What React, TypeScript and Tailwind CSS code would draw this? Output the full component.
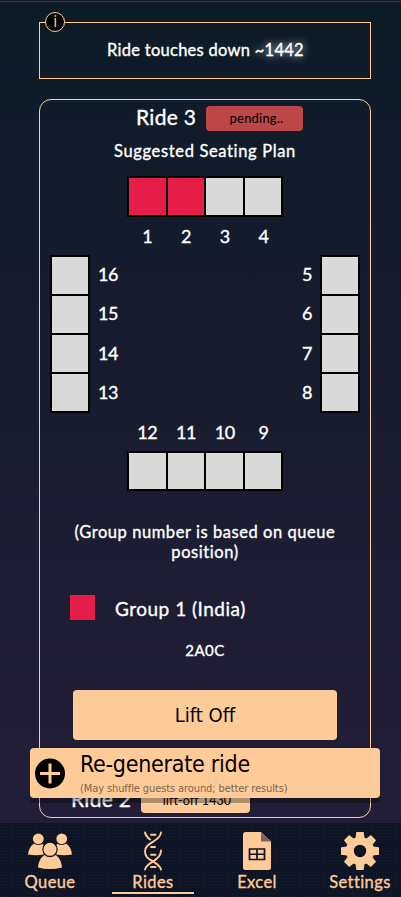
import React from "react";

const SEAT_RED = "bg-[#e71d49]";
const SEAT_EMPTY = "bg-[#d9d9d9]";

function SeatRow({ seats, className }: { seats: boolean[]; className: string }) {
  return (
    <div className={`flex gap-[2px] bg-black p-[2px] ${className}`}>
      {seats.map((taken, i) => (
        <div key={i} className={`flex-1 ${taken ? SEAT_RED : SEAT_EMPTY}`} />
      ))}
    </div>
  );
}

function SeatNumbers({ values, className }: { values: number[]; className: string }) {
  return (
    <div className={`flex text-[18px] leading-[39px] tracking-[-0.4px] ${className}`}>
      {values.map((v) => (
        <span key={v} className="flex-1">
          {v}
        </span>
      ))}
    </div>
  );
}

function QueueIcon() {
  return (
    <svg width="44" height="37" viewBox="0 0 44 37" fill="#ffcb98">
      <circle cx="10.3" cy="5.8" r="5.4" />
      <circle cx="33.7" cy="5.8" r="5.4" />
      <path d="M0 21.5C.5 16.500 2.500 13 6 10.500Q10.300 13.500 14.500 10.800L16.500 13Q14 17 15.800 21.500Q8 23 0 21.500Z" />
      <path d="M44 21.500C43.500 16.500 41.500 13 38 10.500Q33.700 13.500 29.500 10.800L27.500 13Q30 17 28.200 21.500Q36 23 44 21.500Z" />
      <circle cx="22" cy="16.300" r="7.700" fill="#0e1424" />
      <circle cx="22" cy="16.300" r="6.500" />
      <path d="M10 34.500C10.500 29 12.500 24.500 16.500 22Q22 26.500 27.500 22C31.500 24.500 33.500 29 34 34.500Q22 37.500 10 34.500Z" />
    </svg>
  );
}

function RidesIcon() {
  return (
    <svg width="18" height="40" viewBox="0 0 18 40" fill="none" stroke="#ffcb98" strokeWidth="1.900" strokeLinecap="round">
      <path d="M1 1.500C1.500 4.500 3.500 6.500 6 8.500" />
      <path d="M17 1.500C16 11 1 11 1 20.500C1 26 5 28 9 30.500C13 33 16 34.500 17 38.500" />
      <path d="M17 19.500C17 25 13 28 9 30.500C5 33 2 34.500 1 38.500" />
      <path d="M7 3.700H11.500M7 16H11M7 23.700H11.500M7 36H11.500" />
    </svg>
  );
}

function ExcelIcon() {
  return (
    <svg width="28" height="38" viewBox="0 0 28 38">
      <path d="M2.500 0H18L28 9.500V35.500Q28 38 25.500 38H2.500Q0 38 0 35.500V2.500Q0 0 2.500 0Z" fill="#ffcb98" />
      <path d="M18 0V9.500H28Z" fill="#7b6455" />
      <path d="M6.500 17H21.500V27.500H6.500ZM6.500 22.250H21.500M14 17V27.500" fill="none" stroke="#0e1424" strokeWidth="1.700" />
    </svg>
  );
}

function SettingsIcon() {
  return (
    <svg width="38" height="38" viewBox="0 0 38 38" fill="#ffcb98">
      {[0, 45, 90, 135, 180, 225, 270, 315].map((a) => (
        <path key={a} d="M14.300 8L15.300 0H22.700L23.700 8Z" transform={`rotate(${a} 19 19)`} />
      ))}
      <circle cx="19" cy="19" r="14" />
      <circle cx="19" cy="19" r="6.200" fill="#0e1424" />
    </svg>
  );
}

function NavItem({ label, active, className, children }: { label: string; active?: boolean; className: string; children: React.ReactNode }) {
  return (
    <div className={`flex shrink-0 flex-col items-center ${className}`}>
      <div className="flex h-[48px] items-center pt-[8px]">{children}</div>
      <span className="h-[20px] text-[16.5px] leading-[22px] tracking-[0.4px] whitespace-nowrap">{label}</span>
      {active && <div className="mt-[1px] h-[2px] w-[82px] bg-[#ffcb98]" />}
    </div>
  );
}

export default function App() {
  return (
    <div className="relative h-[897px] w-[401px] overflow-hidden bg-linear-to-b from-[#0d1b27] via-[#1a1c30] to-[#251e3a] pt-[22px] text-center font-[Lato,sans-serif] text-white [-webkit-text-stroke:0.35px_currentColor]">
      <div className="absolute inset-x-0 top-0 h-[2px] border-b border-[#3b3840] bg-[#17181d]" />
      <div className="relative ml-[39px] flex h-[57px] w-[332px] items-center justify-center border border-[#ffcb98] text-[16.5px] tracking-[0.27px]">
        <div className="absolute -top-[11px] left-[5px] flex size-[20px] items-center justify-center rounded-full border border-[#ffcb98] bg-black pl-[1px] font-['DejaVu_Sans_Condensed',sans-serif] text-[16px] text-[#ffcb98] [-webkit-text-stroke:0]">
          i
        </div>
        <p className="pl-[1px]">
          Ride touches down <span className="[text-shadow:0_0_8px_#fff]">~1442</span>
        </p>
      </div>
      <div className="mt-[20px] ml-[39px] h-[719px] w-[332px] rounded-[12px] border border-[#ffcb98]">
        <div className="flex h-[37px] gap-[10px] pt-[6px] pl-[96px]">
          <h2 className="w-[60px] text-[21px] leading-[22px] tracking-[0.3px] whitespace-nowrap">Ride 3</h2>
          <div className="h-[25px] w-[97px] rounded-[4px] bg-[#bd4748] pl-[4px] text-[13px] leading-[25px] tracking-[0.2px] text-black [-webkit-text-stroke:0]">pending..</div>
        </div>
        <p className="h-[39px] text-[16.5px] leading-[28px] tracking-[0.65px]">Suggested Seating Plan</p>
        <SeatRow seats={[true, true, false, false]} className="ml-[87px] h-[41px] w-[156px]" />
        <SeatNumbers values={[1, 2, 3, 4]} className="ml-[88px] h-[38px] w-[155px]" />
        <div className="flex h-[158px] justify-between px-[10px]">
          <div className="flex gap-[8px]">
            <SeatRow seats={[false, false, false, false]} className="w-[40px] flex-col" />
            <SeatNumbers values={[16, 15, 14, 13]} className="flex-col pb-[1px]" />
          </div>
          <div className="flex gap-[8px]">
            <SeatNumbers values={[5, 6, 7, 8]} className="flex-col pb-[1px]" />
            <SeatRow seats={[false, false, false, false]} className="w-[40px] flex-col" />
          </div>
        </div>
        <SeatNumbers values={[12, 11, 10, 9]} className="ml-[88px] h-[38px] w-[155px]" />
        <SeatRow seats={[false, false, false, false]} className="ml-[87px] h-[40px] w-[156px]" />
        <p className="mt-[31px] text-[16.5px] leading-[20px] tracking-[0.56px]">
          (Group number is based on queue
          <br />
          position)
        </p>
        <div className="mt-[33px] flex h-[25px] gap-[20px] pl-[30px]">
          <div className="size-[25px] bg-[#e71d49]" />
          <span className="text-[19px] leading-[28px] tracking-[0.5px]">Group 1 (India)</span>
        </div>
        <p className="mt-[20px] text-[15px] leading-[20px] tracking-[0.5px]">2A0C</p>
        <button className="mt-[30px] ml-[33px] block h-[50px] w-[264px] rounded-[4px] bg-[#ffcb98] font-['DejaVu_Sans_Condensed',sans-serif] text-[20px] text-black [-webkit-text-stroke:0]">
          Lift Off
        </button>
        <div className="mt-[48px] flex h-[25px] gap-[10px] pl-[31px]">
          <h2 className="w-[60px] text-[21px] leading-[21px] tracking-[0.3px] whitespace-nowrap">Ride 2</h2>
          <div className="h-[25px] w-[109px] rounded-[4px] bg-[#ffcb98] pl-[3px] text-[12.5px] leading-[25px] tracking-[0.1px] text-black [-webkit-text-stroke:0]">lift-off 1430</div>
        </div>
      </div>

      <div className="absolute top-[748px] left-[30px] flex h-[50px] w-[350px] rounded-[4px] bg-[#ffcb98] pl-[5px] text-left font-['DejaVu_Sans_Condensed',sans-serif] text-black shadow-[0_5px_0_rgba(0,0,0,0.3)] [-webkit-text-stroke:0]">
        <svg className="mt-[10px]" width="31" height="31" viewBox="0 0 31 31">
          <circle cx="15" cy="15.500" r="15" />
          <path d="M15 5.500V25.500M5 15.500H25" stroke="#ffcb98" strokeWidth="3" />
        </svg>
        <div className="ml-[14px] flex flex-col whitespace-nowrap">
          <span className="text-[23px] leading-[32px] tracking-[-0.25px]">Re-generate ride</span>
          <span className="text-[11px] leading-[17px] tracking-[-0.1px] text-[#7d644d]">(May shuffle guests around; better results)</span>
        </div>
      </div>

      <nav className="absolute inset-x-0 bottom-0 flex h-[74px] bg-[#0e1424] bg-[radial-gradient(#142033_0.8px,transparent_0.8px)] bg-[size:3px_3px] text-[#ffcb98]">
        <NavItem label="Queue" className="ml-[8px] w-[84px]"><QueueIcon /></NavItem>
        <NavItem label="Rides" active className="ml-[20px] w-[82px]"><RidesIcon /></NavItem>
        <NavItem label="Excel" className="ml-[21px] w-[84px]"><ExcelIcon /></NavItem>
        <NavItem label="Settings" className="ml-[19px] w-[84px]"><SettingsIcon /></NavItem>
      </nav>
    </div>
  );
}
